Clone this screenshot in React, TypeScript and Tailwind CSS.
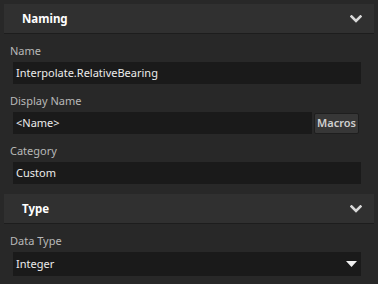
import React from "react";

const font = { fontFamily: '"Noto Sans", "Open Sans", sans-serif' };

function Chevron() {
  return (
    <svg width="12" height="8" viewBox="0 0 12 8" className="mr-[12px]">
      <path d="M1.5 1.5 L6 6 L10.5 1.5" stroke="#d8d8d8" strokeWidth="2.6" fill="none" strokeLinecap="square" />
    </svg>
  );
}

function Header({ title, className }: { title: string; className?: string }) {
  return (
    <div className={`mx-1 h-[30px] bg-[#303030] border-b border-[#1d1d1d] flex items-center justify-between ${className ?? ""}`}>
      <span className="pl-[18px] text-[11.5px] font-bold text-white leading-none">{title}</span>
      <Chevron />
    </div>
  );
}

function Label({ text }: { text: string }) {
  return <div className="mt-[9px] ml-[10px] h-[16px] text-[11px] leading-[16px] text-[#b8b8b8]">{text}</div>;
}

function Input({ value, className }: { value: string; className?: string }) {
  return (
    <div className={`h-[22px] bg-[#1a1a1a] pl-[3px] flex items-center text-[11px] text-[#ececec] ${className ?? ""}`}>
      {value}
    </div>
  );
}

export default function App() {
  return (
    <div className="w-[378px] h-[284px] bg-[#282828] pt-1 overflow-hidden" style={font}>
      <Header title="Naming" />
      <Label text="Name" />
      <div className="mt-[3px] ml-[13px] w-[348px]">
        <Input value="Interpolate.RelativeBearing" />
      </div>
      <Label text="Display Name" />
      <div className="mt-[3px] ml-[13px] w-[348px] flex items-center gap-[2px]">
        <Input value="<Name>" className="w-[299px]" />
        <div className="h-[21px] w-[45px] bg-[#373737] border border-[#1e1e1e] rounded-[2px] flex items-center justify-center text-[11px] font-semibold text-[#cfcfcf]">
          Macros
        </div>
      </div>
      <Label text="Category" />
      <div className="mt-[3px] ml-[13px] w-[348px]">
        <Input value="Custom" />
      </div>
      <Header title="Type" className="mt-[10px]" />
      <Label text="Data Type" />
      <div className="mt-[3px] ml-[13px] w-[348px] h-[24px] bg-[#1a1a1a] pl-[3px] pr-[4px] flex items-center justify-between text-[11px] text-[#ececec]">
        <span>Integer</span>
        <svg width="11" height="6" viewBox="0 0 11 6">
          <path d="M0 0 H11 L5.5 6 Z" fill="#f0f0f0" />
        </svg>
      </div>
    </div>
  );
}
